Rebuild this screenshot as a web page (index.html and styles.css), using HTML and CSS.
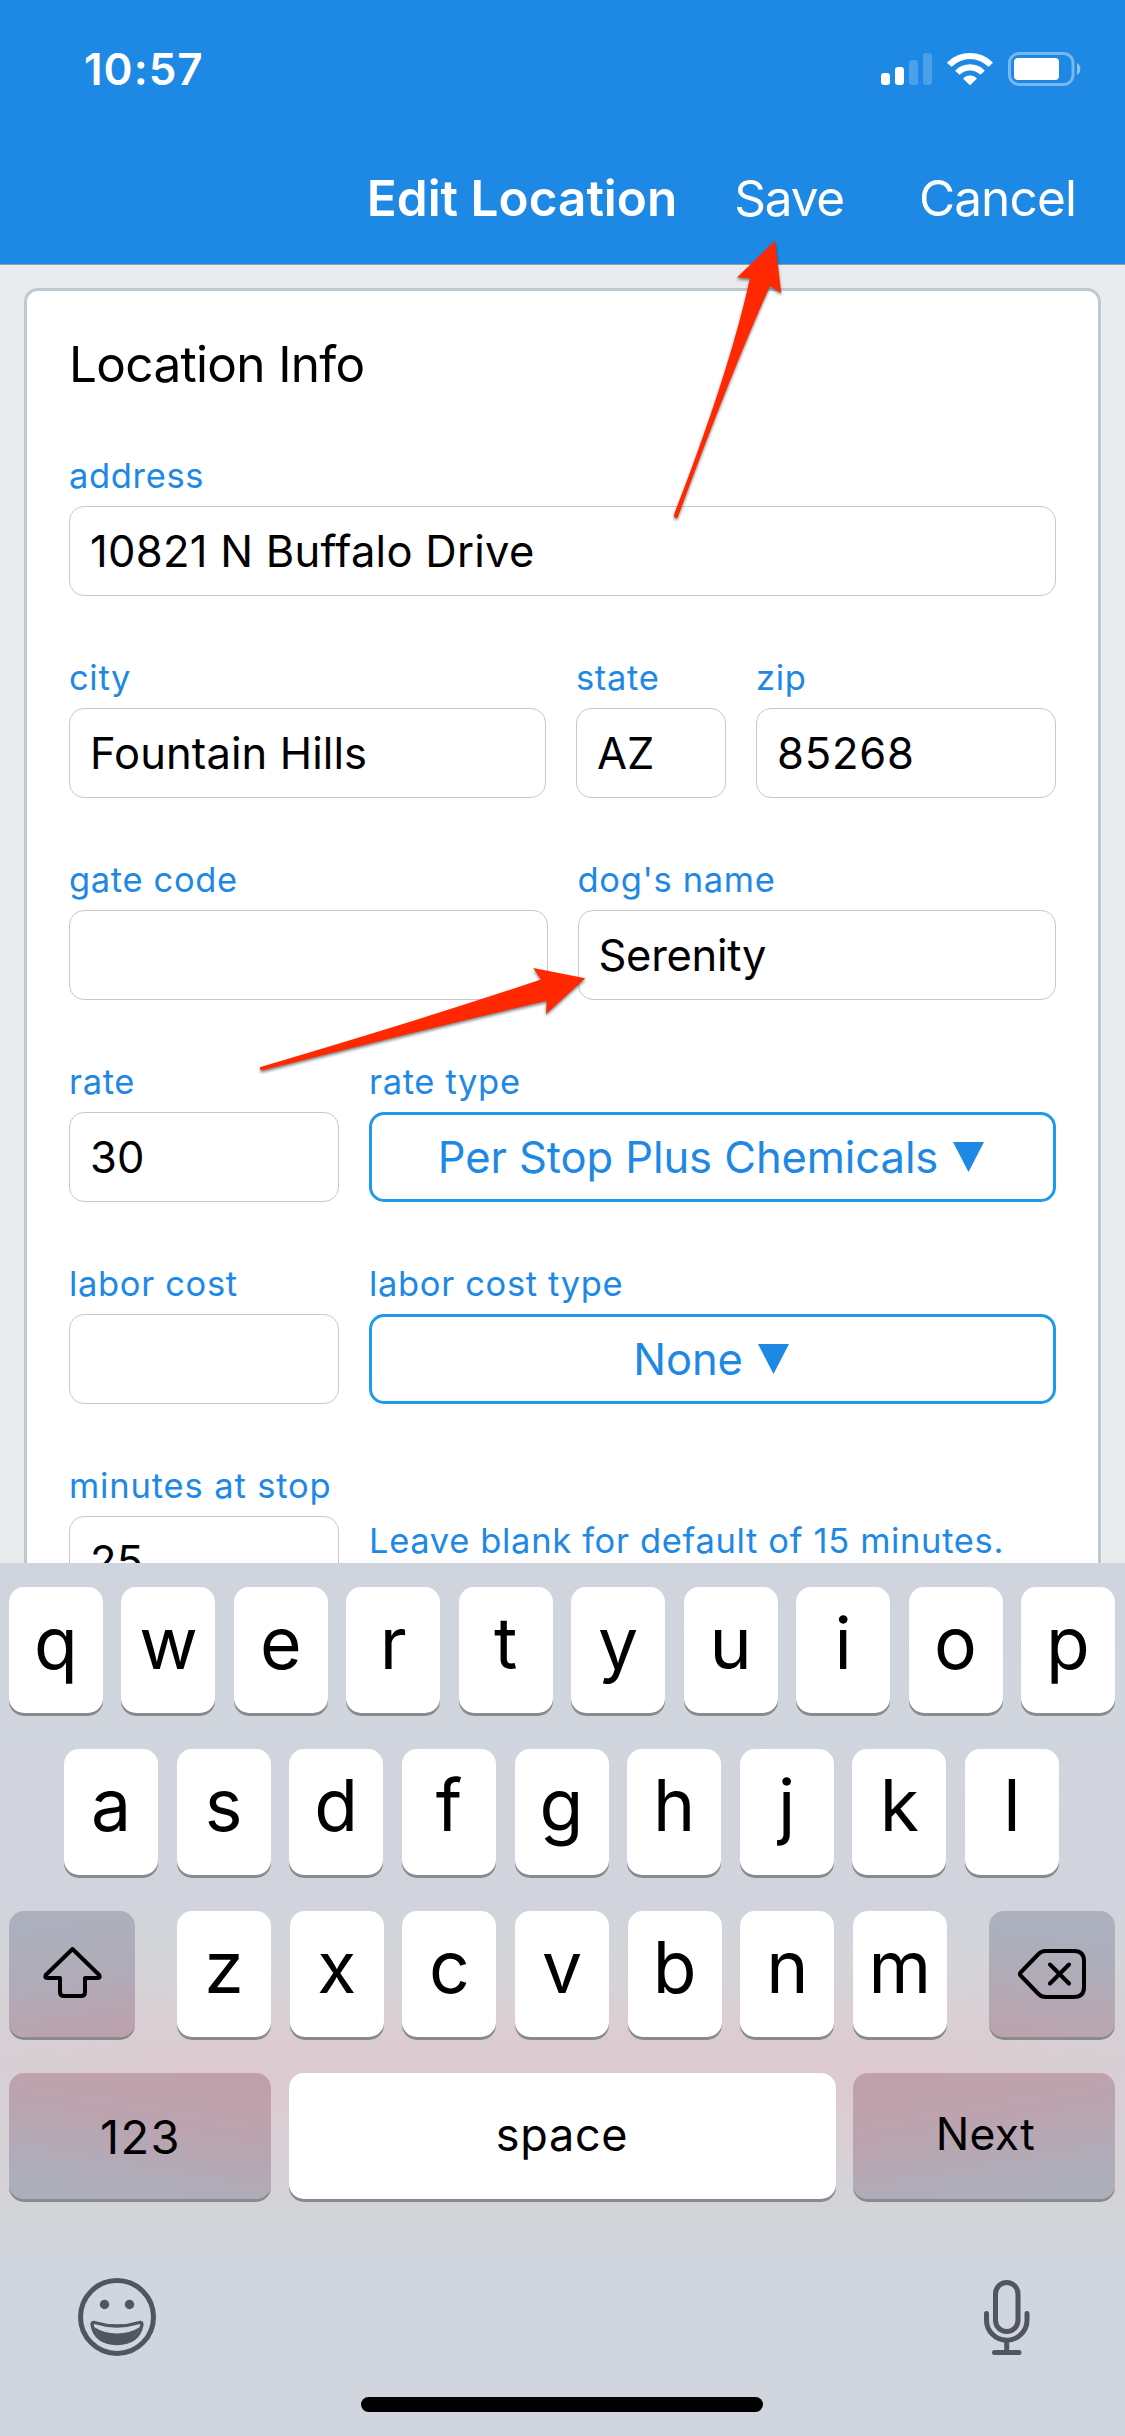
FILE: index.html
```html
<!DOCTYPE html>
<html lang="en">
<head>
<meta charset="utf-8">
<title>Edit Location</title>
<link rel="stylesheet" href="styles.css">
</head>
<body>
<div class="screen">
  <header class="header">
    <div class="status">
      <span class="time">10:57</span>
      <svg class="status-icons" width="202" height="34" viewBox="0 0 202 34">
        <g fill="#fff">
          <rect x="0" y="21" width="9" height="12" rx="3"/>
          <rect x="14" y="15" width="9" height="18" rx="3"/>
          <g opacity=".2">
            <rect x="28" y="8" width="9" height="25" rx="3"/>
            <rect x="42" y="1" width="9" height="32" rx="3"/>
          </g>
          <path d="M66.4 10.2 A32.3 32.3 0 0 1 111.6 10.2 Q112 10.7 111.5 11.2 L108.2 14.2 Q107.4 14.8 106.7 14.2 A25.5 25.5 0 0 0 71.3 14.2 Q70.6 14.8 69.8 14.2 L66.5 11.2 Q66 10.7 66.4 10.2Z"/>
          <path d="M74.6 18.2 A20.6 20.6 0 0 1 103.4 18.2 Q103.9 18.7 103.4 19.2 L100 22.3 Q99.4 22.8 98.8 22.3 A14.2 14.2 0 0 0 79.2 22.3 Q78.6 22.8 78 22.3 L74.6 19.2 Q74.1 18.7 74.6 18.2Z"/>
          <path d="M82.5 26 A10 10 0 0 1 95.5 26 Q96 26.5 95.5 27 L89.6 32.7 Q89 33.2 88.4 32.7 L82.5 27 Q82 26.5 82.5 26Z"/>
          <rect x="128.500" y="1.500" width="63.500" height="31" rx="9.500" fill="none" stroke="#fff" stroke-opacity=".4" stroke-width="3"/>
          <rect x="133" y="6" width="45" height="22" rx="4"/>
          <path d="M196 11 A7 7 0 0 1 196 23Z" opacity=".5"/>
        </g>
      </svg>
    </div>
    <nav class="nav">
      <h1 class="nav-title">Edit Location</h1>
      <span class="nav-save">Save</span>
      <span class="nav-cancel">Cancel</span>
    </nav>
  </header>

  <main class="content">
    <section class="card">
      <h2 class="card-title">Location Info</h2>
      <div class="row address">
        <div class="field"><span class="label">address</span><div class="input wide">10821 N Buffalo Drive</div></div>
      </div>
      <div class="row place">
        <div class="field"><span class="label">city</span><div class="input">Fountain Hills</div></div>
        <div class="field"><span class="label">state</span><div class="input">AZ</div></div>
        <div class="field"><span class="label">zip</span><div class="input zip">85268</div></div>
      </div>
      <div class="row halves">
        <div class="field"><span class="label">gate code</span><div class="input"></div></div>
        <div class="field"><span class="label">dog's name</span><div class="input tight">Serenity</div></div>
      </div>
      <div class="row cost">
        <div class="field"><span class="label">rate</span><div class="input">30</div></div>
        <div class="field"><span class="label">rate type</span>
          <div class="select">Per Stop Plus Chemicals<svg width="31" height="30" viewBox="0 0 30 29"><path d="M0 0H30L15 29Z"/></svg></div></div>
      </div>
      <div class="row cost">
        <div class="field"><span class="label">labor cost</span><div class="input"></div></div>
        <div class="field"><span class="label">labor cost type</span>
          <div class="select">None<svg width="31" height="30" viewBox="0 0 30 29"><path d="M0 0H30L15 29Z"/></svg></div></div>
      </div>
      <div class="row cost">
        <div class="field"><span class="label minutes">minutes at stop</span><div class="input">25</div></div>
        <span class="label note">Leave blank for default of 15 minutes.</span>
      </div>
    </section>
  </main>

  <section class="keyboard">
    <div class="keys"><span class="key">q</span><span class="key">w</span><span class="key">e</span><span class="key">r</span><span class="key">t</span><span class="key">y</span><span class="key">u</span><span class="key">i</span><span class="key">o</span><span class="key">p</span></div>
    <div class="keys keys-middle"><span class="key">a</span><span class="key">s</span><span class="key">d</span><span class="key">f</span><span class="key">g</span><span class="key">h</span><span class="key">j</span><span class="key">k</span><span class="key">l</span></div>
    <div class="keys keys-lower">
      <span class="key special shift">
        <svg width="60" height="54" viewBox="0 0 60 54" fill="none" stroke="#000" stroke-width="4" stroke-linejoin="round"><path d="M29.500 3 L2.800 29 Q1.500 32 4 32 H17 V46 Q17 50 21 50 H38 Q42 50 42 46 V32 H55 Q57.500 32 56.200 29 Z"/></svg>
      </span>
      <div class="letters"><span class="key">z</span><span class="key">x</span><span class="key">c</span><span class="key">v</span><span class="key">b</span><span class="key">n</span><span class="key">m</span></div>
      <span class="key special delete">
        <svg width="68" height="50" viewBox="0 0 68 50" fill="none" stroke="#000" stroke-width="4" stroke-linecap="round" stroke-linejoin="round"><path d="M2.600 23.500 L20.500 5 Q23.500 2 27.500 2 H56 Q66 2 66 12 V38 Q66 48 56 48 H27.500 Q23.500 48 20.500 45 L2.600 26.500 Q1.300 25 2.600 23.500Z M32 15.500 L51 34.500 M51 15.500 L32 34.500"/></svg>
      </span>
    </div>
    <div class="keys keys-bottom">
      <span class="key special numbers">123</span>
      <span class="key space">space</span>
      <span class="key special next">Next</span>
    </div>
    <div class="tools">
      <svg width="78" height="78" viewBox="0 0 78 78" fill="none" stroke="#50555e">
        <circle cx="39" cy="39" r="36.500" stroke-width="5"/>
        <circle cx="26.500" cy="26.500" r="4.700" fill="#50555e" stroke="none"/>
        <circle cx="51.500" cy="26.500" r="4.700" fill="#50555e" stroke="none"/>
        <path d="M16.500 44.500 Q14 44 14 46.500 Q17.500 65.500 39 65.500 Q60.500 65.500 64 46.500 Q64 44 61.500 44.500 Q39 51.500 16.500 44.500Z" stroke-width="3.400" stroke-linejoin="round"/>
        <path d="M16 49 Q26 55.500 39 55.500 Q52 55.500 62 49 Q56 65.500 39 65.500 Q22 65.500 16 49Z" fill="#50555e" stroke="none"/>
      </svg>
      <svg width="46" height="76" viewBox="0 0 46 76" fill="none" stroke="#50555e" stroke-width="5" stroke-linecap="round">
        <rect x="11.500" y="2.500" width="22.500" height="49" rx="11.250"/>
        <path d="M2.500 33.500 V40 A20.200 20.200 0 0 0 43 40 V33.500 M22.700 61 V72 M10.500 72.500 H35"/>
      </svg>
    </div>
    <div class="home-bar"></div>
  </section>

  <svg class="arrows" width="1125" height="1100" viewBox="0 0 1125 1100" fill="#ff2800">
    <path d="M775 240.700 L781.200 293.300 L770 285.700 Q728 380 678 516.500 Q676.500 519.500 674 516.500 Q674 515 674.600 513 Q730 370 750 278.300 L737 277.500Z"/>
    <path d="M585.300 978.300 L546 1014 L546.700 1000.700 Q430 1028 262 1070.500 Q258.500 1069.500 260.500 1067 Q430 1017 541 979.500 L533.300 968Z"/>
  </svg>
</div>
</body>
</html>
```
FILE: styles.css
```css
* { box-sizing: border-box; }

body {
  margin: 0;
  font-family: Inter, "Liberation Sans", sans-serif;
  color: #000;
}

.screen {
  position: relative;
  display: flex;
  flex-direction: column;
  width: 1125px;
  height: 2436px;
  overflow: hidden;
  background: #e9ebee;
}

h1, h2 { margin: 0; font-size: inherit; font-weight: inherit; }
svg { display: block; flex: none; }

/* Header */
.header {
  flex: none;
  height: 265px;
  padding-top: 42px;
  background: #1e88e5;
  border-bottom: 1px solid #8d9dab;
  color: #fff;
}

.status {
  display: flex;
  justify-content: space-between;
  height: 54px;
  padding: 0 42px 0 84px;
}

.time {
  font-size: 44px;
  font-weight: 600;
  line-height: 54px;
  letter-spacing: 1px;
}

.status-icons { margin-top: 10px; }

.nav {
  display: flex;
  justify-content: flex-end;
  margin-top: 72px;
  padding-right: 49px;
  font-size: 49.5px;
  line-height: 60px;
}

.nav-title { font-weight: 600; letter-spacing: 0; }
.nav-save { margin: 0 75px 0 57px; letter-spacing: -1.23px; }
.nav-cancel { letter-spacing: -.87px; }

/* Form card */
.content {
  flex: 1;
  min-height: 0;
  overflow: hidden;
  padding: 23px 24px 0;
}

.card {
  display: flex;
  flex-direction: column;
  gap: 60px;
  height: 1500px;
  padding: 43px 42px 0;
  background: #fff;
  border: 3px solid #bfc9d0;
  border-radius: 14px;
}

.card-title {
  height: 60px;
  font-size: 49.5px;
  line-height: 60px;
  letter-spacing: -.68px;
}

.row { display: grid; column-gap: 30px; }
.place { grid-template-columns: 477px 150px 300px; }
.halves { grid-template-columns: 1fr 1fr; }
.cost { grid-template-columns: 270px 1fr; }

.field { display: flex; flex-direction: column; gap: 9px; }

.label {
  padding-top: 1px;
  font-size: 34.5px;
  line-height: 42px;
  letter-spacing: .66px;
  color: #1e88e5;
  white-space: nowrap;
}

.minutes { letter-spacing: .86px; }
.note { margin-top: 55px; }

.input, .select {
  height: 90px;
  border-radius: 15px;
  font-size: 43.5px;
  white-space: nowrap;
}

.input {
  padding-left: 20px;
  border: 1px solid #c8c8c8;
  line-height: 88px;
  letter-spacing: .1px;
}

.wide { letter-spacing: .28px; }
.zip { letter-spacing: .79px; }
.tight { letter-spacing: -.3px; }

.select {
  display: flex;
  align-items: center;
  justify-content: center;
  gap: 15px;
  padding-right: 3px;
  border: 3px solid #1f9aea;
  letter-spacing: -.07px;
  color: #1e88e5;
}

.select svg { fill: #1e88e5; }

/* Keyboard */
.keyboard {
  flex: none;
  height: 873px;
  padding: 24px 10px 0 9px;
  background:
    linear-gradient(90deg, rgba(209, 211, 214, .5), rgba(209, 211, 214, 0) 18%, rgba(209, 211, 214, 0) 82%, rgba(209, 211, 214, .5)) 0 420px / 100% 180px no-repeat,
    linear-gradient(#d0d5dd 0, #d1d4dc 345px, #d4d5d9 400px, #dacfd4 450px, #dccad0 500px, #dbccd2 540px, #d4d3d7 630px, #d3d5d9 655px, #d1d5dd 685px, #d1d5dd 100%);
}

.keys {
  display: flex;
  justify-content: space-between;
  height: 126px;
  margin-bottom: 36px;
}

.keys-middle { padding: 0 56px 0 55px; }

.key {
  display: flex;
  justify-content: center;
  width: 94px;
  height: 126px;
  border-radius: 15px;
  background: #fff;
  box-shadow: 0 3px 0 #898a8d;
  font-size: 71.5px;
  font-weight: 400;
  line-height: 112px;
}

.letters {
  display: flex;
  justify-content: space-between;
  width: 770px;
}

.special { background: linear-gradient(170deg, #abb0bc 15%, #b1abb8 55%, #bda0ab); }
.shift, .delete { width: 126px; }
.delete { background: linear-gradient(188deg, #abb0bc 25%, #b3aab6 62%, #bda2ac); }
.shift svg { margin: 35px 0 0 1px; }
.delete svg { margin: 38px 0 0; }

.numbers, .space, .next {
  width: 262px;
  font-size: 44.5px;
  font-weight: 400;
  line-height: 123px;
}

.numbers {
  padding-left: 1px;
  font-size: 47px;
  line-height: 128px;
  letter-spacing: 1.4px;
  background: linear-gradient(190deg, #c0a1aa 10%, #bba4af 42%, #b0acb9 75%, #abb0bc);
}

.space { width: 547px; font-size: 45px; letter-spacing: .7px; }

.next {
  padding-left: 3px;
  letter-spacing: .3px;
  background: linear-gradient(170deg, #c0a1aa 10%, #bba4af 42%, #b0acb9 75%, #abb0bc);
}

.tools {
  display: flex;
  justify-content: space-between;
  align-items: flex-start;
  height: 119px;
  margin-top: 79px;
  padding: 0 85px 0 69px;
}

.tools svg + svg { margin-top: 2px; }

.home-bar {
  width: 402px;
  height: 15px;
  margin: 0 auto;
  border-radius: 8px;
  background: #000;
}

/* Callout arrows drawn over the form */
.arrows {
  position: absolute;
  top: 0;
  left: 0;
  filter: drop-shadow(0 2px 1.5px rgba(0, 0, 0, .5));
}
```
